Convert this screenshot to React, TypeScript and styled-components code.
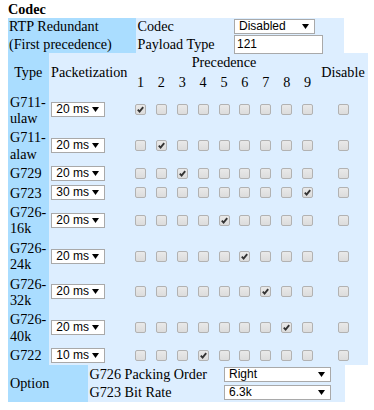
import styled, { createGlobalStyle } from "styled-components";

interface CodecRow {
  name: string;
  tall: boolean;
  ptime: string;
  pick: number;
}

const codecs: CodecRow[] = [
  { name: "G711-\nulaw", tall: true, ptime: "20 ms", pick: 1 },
  { name: "G711-\nalaw", tall: true, ptime: "20 ms", pick: 2 },
  { name: "G729", tall: false, ptime: "20 ms", pick: 3 },
  { name: "G723", tall: false, ptime: "30 ms", pick: 9 },
  { name: "G726-\n16k", tall: true, ptime: "20 ms", pick: 5 },
  { name: "G726-\n24k", tall: true, ptime: "20 ms", pick: 6 },
  { name: "G726-\n32k", tall: true, ptime: "20 ms", pick: 7 },
  { name: "G726-\n40k", tall: true, ptime: "20 ms", pick: 8 },
  { name: "G722", tall: false, ptime: "10 ms", pick: 4 },
];

const PRECEDENCE = [1, 2, 3, 4, 5, 6, 7, 8, 9];

const DARK = "#aaddff";
const LIGHT = "#ddeeff";
const COLUMNS = "40.5px 81.5px repeat(9, 20.9px) 50px";

function Select({ width, value }: { width: number; value: string }) {
  return (
    <SC_Select $width={width} role="combobox">
      <span>{value}</span>
      <svg width="7" height="5" viewBox="0 0 7 5">
        <polygon points="0,0 7,0 3.5,5" fill="#000" />
      </svg>
    </SC_Select>
  );
}

function Checkbox({ checked }: { checked: boolean }) {
  return (
    <SC_Checkbox role="checkbox" aria-checked={checked}>
      {checked && (
        <svg width="9" height="9" viewBox="0 0 9 9">
          <path d="M1.8 4.6 L3.6 6.6 L7.2 2.2" fill="none" stroke="#333" strokeWidth="1.9" />
        </svg>
      )}
    </SC_Checkbox>
  );
}

export default function App() {
  return (
    <>
      <GlobalStyle />
      <SC_Title>Codec</SC_Title>

      <SC_RtpTable>
        <SC_RtpLabel>
          RTP Redundant
          <br />
          (First precedence)
        </SC_RtpLabel>
        <SC_FieldLabel>Codec</SC_FieldLabel>
        <SC_FieldControl>
          <Select width={81} value="Disabled" />
        </SC_FieldControl>
        <SC_FieldLabel>Payload Type</SC_FieldLabel>
        <SC_FieldControl>
          <SC_Input defaultValue="121" />
        </SC_FieldControl>
      </SC_RtpTable>

      <SC_CodecTable>
        <SC_HeadRow>
          <SC_HeadCell $col="1" $row="1 / 3" $dark>
            Type
          </SC_HeadCell>
          <SC_HeadCell $col="2" $row="1 / 3">
            Packetization
          </SC_HeadCell>
          <SC_HeadCell $col="3 / 12" $row="1">
            Precedence
          </SC_HeadCell>
          {PRECEDENCE.map((n) => (
            <SC_HeadCell key={n} $col={String(n + 2)} $row="2">
              {n}
            </SC_HeadCell>
          ))}
          <SC_HeadCell $col="12" $row="1 / 3">
            Disable
          </SC_HeadCell>
        </SC_HeadRow>

        {codecs.map((c) => (
          <SC_Row key={c.name} $tall={c.tall}>
            <SC_TypeCell>{c.name}</SC_TypeCell>
            <SC_PtimeCell>
              <Select width={54} value={c.ptime} />
            </SC_PtimeCell>
            {PRECEDENCE.map((n) => (
              <SC_CheckCell key={n}>
                <Checkbox checked={c.pick === n} />
              </SC_CheckCell>
            ))}
            <SC_CheckCell>
              <Checkbox checked={false} />
            </SC_CheckCell>
          </SC_Row>
        ))}
      </SC_CodecTable>

      <SC_OptionTable>
        <SC_OptionLabel>Option</SC_OptionLabel>
        <SC_FieldLabel>G726 Packing Order</SC_FieldLabel>
        <SC_FieldControl $pad={2}>
          <Select width={107} value="Right" />
        </SC_FieldControl>
        <SC_FieldLabel>G723 Bit Rate</SC_FieldLabel>
        <SC_FieldControl $pad={2}>
          <Select width={107} value="6.3k" />
        </SC_FieldControl>
      </SC_OptionTable>
    </>
  );
}

const GlobalStyle = createGlobalStyle`
  body {
    margin: 0;
    padding: 1px 0 0 8px;
    background: #fff;
    color: #000;
    font-family: "Liberation Serif", "Times New Roman", serif;
    font-size: 14.2px;
  }
`;

const SC_Title = styled.div`
  font-weight: bold;
  height: 17px;
  line-height: 17px;
`;

const SC_RtpTable = styled.div`
  display: grid;
  grid-template-columns: 128px 98px 110px;
  grid-template-rows: 17.5px 17.5px;
  width: 336px;
  background: ${LIGHT};
`;

const SC_RtpLabel = styled.div`
  grid-row: 1 / 3;
  background: ${DARK};
  padding-left: 1px;
  line-height: 17.5px;
  white-space: nowrap;
`;

const SC_FieldLabel = styled.div`
  display: flex;
  align-items: center;
  padding-left: 1.5px;
  white-space: nowrap;
`;

const SC_FieldControl = styled.div<{ $pad?: number }>`
  display: flex;
  align-items: center;
  padding-left: ${(p) => p.$pad ?? 0}px;
`;

const SC_Select = styled.div<{ $width: number }>`
  box-sizing: border-box;
  display: inline-flex;
  align-items: center;
  justify-content: space-between;
  width: ${(p) => p.$width}px;
  height: 15px;
  padding: 0 5px 0 4px;
  border: 1px solid #a9a9a9;
  background: #fff;
  font-family: "Liberation Sans", Arial, sans-serif;
  font-size: 12px;
  line-height: 13px;
  color: #000;
`;

const SC_Input = styled.input`
  box-sizing: border-box;
  width: 89px;
  height: 18.5px;
  margin: 0;
  padding: 0 2px;
  border: 1px solid #a9a9a9;
  background: #fff;
  font-family: "Liberation Sans", Arial, sans-serif;
  font-size: 12px;
  color: #000;
  outline: none;
`;

const SC_CodecTable = styled.div`
  display: flex;
  flex-direction: column;
  width: 360.1px;
  background: ${LIGHT};
`;

const SC_HeadRow = styled.div`
  display: grid;
  grid-template-columns: ${COLUMNS};
  grid-template-rows: 19.5px 19.5px;
`;

const SC_HeadCell = styled.div<{ $col: string; $row: string; $dark?: boolean }>`
  grid-column: ${(p) => p.$col};
  grid-row: ${(p) => p.$row};
  display: flex;
  align-items: center;
  justify-content: center;
  white-space: nowrap;
  background: ${(p) => (p.$dark ? DARK : "transparent")};
`;

const SC_Row = styled.div<{ $tall: boolean }>`
  display: grid;
  grid-template-columns: ${COLUMNS};
  height: ${(p) => (p.$tall ? 35.75 : 19.5)}px;
`;

const SC_TypeCell = styled.div`
  display: flex;
  align-items: center;
  padding-left: 2px;
  background: ${DARK};
  line-height: 16.3px;
  white-space: pre-line;
`;

const SC_PtimeCell = styled.div`
  display: flex;
  align-items: center;
  padding-left: 2.8px;
`;

const SC_CheckCell = styled.div`
  display: flex;
  align-items: center;
  justify-content: center;
`;

const SC_Checkbox = styled.span`
  box-sizing: border-box;
  display: inline-flex;
  align-items: center;
  justify-content: center;
  width: 11px;
  height: 11px;
  border: 1px solid #b2b2b2;
  border-radius: 2px;
  background: linear-gradient(#e9e9e9, #dcdcdc);
`;

const SC_OptionTable = styled.div`
  display: grid;
  grid-template-columns: 80px 134px 123px;
  grid-template-rows: 18.5px 18.5px;
  width: 337px;
  background: ${LIGHT};
`;

const SC_OptionLabel = styled.div`
  grid-row: 1 / 3;
  display: flex;
  align-items: center;
  padding-left: 2px;
  background: ${DARK};
`;
